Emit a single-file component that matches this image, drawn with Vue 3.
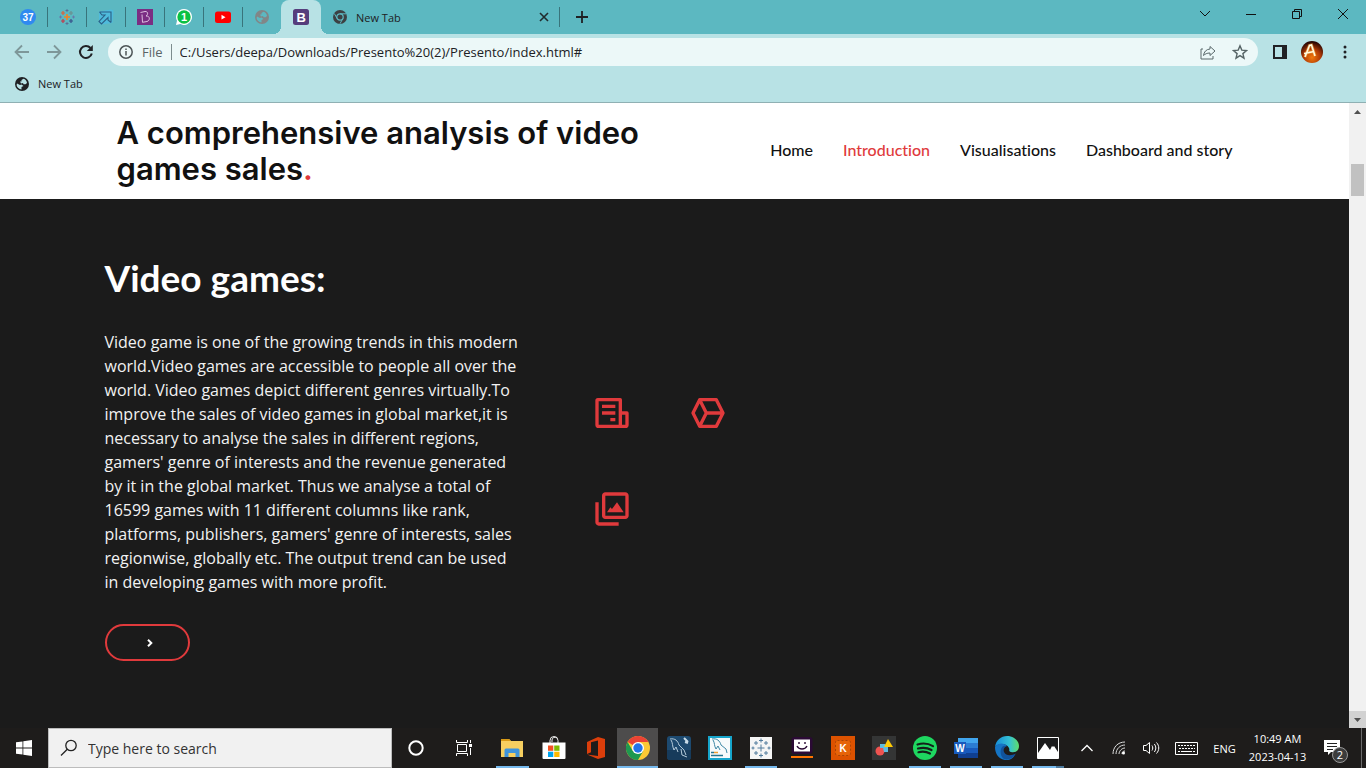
<script setup>
import { ref } from 'vue'

const address = ref('C:/Users/deepa/Downloads/Presento%20(2)/Presento/index.html#')
const search = ref('')
const links = ['Home', 'Introduction', 'Visualisations', 'Dashboard and story']
const lines = [
  'Video game is one of the growing trends in this modern',
  'world.Video games are accessible to people all over the',
  'world. Video games depict different genres virtually.To',
  'improve the sales of video games in global market,it is',
  'necessary to analyse the sales in different regions,',
  "gamers' genre of interests and the revenue generated",
  'by it in the global market. Thus we analyse a total of',
  '16599 games with 11 different columns like rank,',
  "platforms, publishers, gamers' genre of interests, sales",
  'regionwise, globally etc. The output trend can be used',
  'in developing games with more profit.'
]
</script>

<template>
  <div class="screen">
    <div class="tabs">
      <button class="pin" aria-label="Calendar">
        <svg width="16" height="16" viewBox="0 0 16 16"><circle cx="8" cy="8" r="8" fill="#2f8af0" /><text x="8" y="11.5" text-anchor="middle" font-size="10" font-weight="700" fill="#fff" font-family="Liberation Sans, sans-serif">37</text></svg>
      </button>
      <button class="pin" aria-label="Tableau">
        <svg width="16" height="16" viewBox="0 0 16 16" fill="none" stroke-width="1.2">
          <path d="M8 5v6M5 8h6" stroke="#f08326" stroke-width="1.6" />
          <path d="M4 2v4M2 4h4" stroke="#e0603a" />
          <path d="M12 2v4M10 4h4" stroke="#6c8f8f" />
          <path d="M4 10v4M2 12h4" stroke="#c63748" />
          <path d="M12 10v4M10 12h4" stroke="#37508a" />
          <path d="M8 0v3M6.500 1.500h3M8 13v3M6.500 14.500h3" stroke="#5a6591" stroke-width=".8" />
          <path d="M1.500 6.500v3M0 8h3M14.500 6.500v3M13 8h3" stroke="#6a6fa8" stroke-width=".8" />
        </svg>
      </button>
      <button class="pin" aria-label="Shortcut">
        <svg width="16" height="16" viewBox="0 0 16 16" fill="none"><path d="M1 2.500 13 .5l2.500 1-1 12.500L3 15.500 1 14z" fill="#4fbbdc" /><path d="M1.500 3h11.500v10.500M1.500 3 4 6h3L1 12.500 3.500 15 10 8.500V11l3 2.500" stroke="#2a5f85" stroke-width="1.100" /></svg>
      </button>
      <button class="pin" aria-label="Beedy">
        <svg width="16" height="16" viewBox="0 0 16 16" fill="none"><path d="M0 0h16v16H0z" fill="#7b2d83" /><path d="M3.500 3.500 8 2.500c3-.3 3.500 3 1 4.500 4-.5 4.500 4.500 1 5.500l-4.500.8L5 5.500" stroke="#e8cdea" stroke-width=".9" /></svg>
      </button>
      <button class="pin" aria-label="WhatsApp">
        <svg width="16" height="16" viewBox="0 0 16 16"><path d="M8 0a8 8 0 1 1-3.700 15.100L0 16l1-4.200A8 8 0 0 1 8 0z" fill="#fff" /><circle cx="8" cy="8" r="6.700" fill="#0cc143" /><text x="8" y="12" text-anchor="middle" font-size="11" font-weight="700" fill="#fff" font-family="Liberation Sans, sans-serif">1</text></svg>
      </button>
      <button class="pin" aria-label="YouTube">
        <svg width="16" height="16" viewBox="0 0 16 16"><rect y="2.500" width="16" height="11.500" rx="2.500" fill="#f00" /><path d="m6.500 5.800 4 2.400-4 2.400z" fill="#fff" /></svg>
      </button>
      <button class="pin last" aria-label="Web page">
        <svg width="14" height="14" viewBox="0 0 14 14"><circle cx="7" cy="7" r="7" fill="#818687" /><path d="M2 6.500 5 8l1.500-.5L8.500 9 6.500 10v2.400C4 12.300 2 10.300 1.600 8zM8.500 1.800 6.500 3v1.500H5L6 6.500l2-.5.500 1.200h2L12 6c-.2-2-1.700-3.700-3.500-4.200z" fill="#5cb8c1" /></svg>
      </button>
      <button class="pin active" aria-label="Presento">
        <svg width="16" height="16" viewBox="0 0 16 16"><rect width="16" height="16" rx="2.500" fill="#563d7c" /><text x="8.200" y="12.500" text-anchor="middle" font-size="13" font-weight="700" fill="#fff" font-family="Liberation Sans, sans-serif">B</text></svg>
      </button>
      <div class="tab">
        <svg width="14" height="14" viewBox="0 0 14 14"><circle cx="7" cy="7" r="7" fill="#3c4043" /><circle cx="7" cy="7" r="3.200" fill="none" stroke="#5cb8c1" stroke-width="1.200" /><path d="M7 3.800h6M4.200 8.600 1.300 3.500M9.800 8.600 7 13.700" stroke="#5cb8c1" stroke-width="1" /></svg>
        <span>New Tab</span>
        <button aria-label="Close tab"><svg width="10" height="10" viewBox="0 0 10 10"><path d="m1 1 8 8M9 1 1 9" stroke="#202b2d" stroke-width="1.600" /></svg></button>
      </div>
      <button class="plus" aria-label="New tab"><svg width="12" height="12" viewBox="0 0 12 12"><path d="M6 0v12M0 6h12" stroke="#202124" stroke-width="1.800" /></svg></button>
      <div class="win">
        <button aria-label="Search tabs"><svg width="12" height="12" viewBox="0 0 12 12" fill="none"><path d="m1 3 5 5 5-5" stroke="#111" /></svg></button>
        <button aria-label="Minimise"><svg width="12" height="12" viewBox="0 0 12 12"><path d="M1 6.500h10" stroke="#111" /></svg></button>
        <button aria-label="Restore"><svg width="12" height="12" viewBox="0 0 12 12" fill="none" stroke="#111"><path d="M1.500 3.500h7v7h-7zM3.500 3.500v-2h7v7h-2" /></svg></button>
        <button aria-label="Close"><svg width="12" height="12" viewBox="0 0 12 12"><path d="m1 1 10 10M11 1 1 11" stroke="#111" /></svg></button>
      </div>
    </div>

    <div class="toolbar">
      <div class="steer">
        <button aria-label="Back"><svg width="16" height="16" viewBox="0 0 16 16" fill="none" stroke="#7e9799" stroke-width="1.800"><path d="M15 8H2M8 1.500 1.500 8 8 14.500" /></svg></button>
        <button aria-label="Forward"><svg width="16" height="16" viewBox="0 0 16 16" fill="none" stroke="#7e9799" stroke-width="1.800"><path d="M1 8h13M8 1.500 14.500 8 8 14.500" /></svg></button>
        <button aria-label="Reload"><svg width="16" height="16" viewBox="0 0 16 16" fill="none"><path d="M13.800 9.500A6 6 0 1 1 12.500 4" stroke="#202124" stroke-width="2" /><path d="M14.800 1v6h-6z" fill="#202124" /></svg></button>
      </div>
      <div class="omni">
        <svg width="14" height="14" viewBox="0 0 14 14" fill="none" stroke="#4d5557"><circle cx="7" cy="7" r="6.200" stroke-width="1.500" /><path d="M7 6v4.500M7 3.500V5" stroke-width="1.500" /></svg>
        <label for="address">File</label>
        <input id="address" v-model="address" type="text" spellcheck="false" />
        <button aria-label="Share"><svg width="16" height="16" viewBox="0 0 16 16" fill="none" stroke="#5a696b"><path d="M3 5H1v10h12v-3" /><path d="M10 2.500 15 7l-5 4.500V9c-3 0-5 1-6.500 2.500C4 8 6 5.300 10 5z" stroke-linejoin="round" /></svg></button>
        <button aria-label="Bookmark"><svg width="16" height="16" viewBox="0 0 16 16" fill="none"><path d="m8 1.800 1.800 4.300 4.700.4-3.600 3.100 1.100 4.600L8 11.700l-4 2.500 1.100-4.600-3.600-3.100 4.700-.4z" stroke="#566466" stroke-width="1.400" /></svg></button>
      </div>
      <button class="side" aria-label="Side panel"><svg width="14" height="14" viewBox="0 0 14 14"><path d="M0 0h14v14H0zM2 2v10h7V2z" fill="#202124" fill-rule="evenodd" /></svg></button>
      <button class="face" aria-label="Profile">
        <svg width="22" height="22" viewBox="0 0 22 22">
          <defs><radialGradient id="ember" cx=".5" cy=".75" r=".7"><stop stop-color="#f27a0c" /><stop offset=".55" stop-color="#b03a05" /><stop offset="1" stop-color="#2a0703" /></radialGradient></defs>
          <circle cx="11" cy="11" r="11" fill="url(#ember)" /><path d="M4 16 8.500 4.500l2-.5L14 15M6 11.500l7-1" fill="none" stroke="#ffb347" stroke-width="3" opacity=".6" /><path d="M4 16 8.500 4.500l2-.5L14 15M3 12.500l10-2" fill="none" stroke="#fffbe0" stroke-width="1.500" />
        </svg>
      </button>
      <button class="more" aria-label="Menu"><svg width="4" height="14" viewBox="0 0 4 14" fill="#202124"><circle cx="2" cy="2" r="1.500" /><circle cx="2" cy="7" r="1.500" /><circle cx="2" cy="12" r="1.500" /></svg></button>
    </div>

    <div class="bookmarks">
      <a href="#">
        <svg width="14" height="14" viewBox="0 0 14 14"><circle cx="7" cy="7" r="7" fill="#202124" /><path d="M2 6.500 5 8l1.500-.5L8.500 9 6.500 10v2.400C4 12.300 2 10.300 1.600 8zM8.500 1.800 6.500 3v1.500H5L6 6.500l2-.5.500 1.200h2L12 6c-.2-2-1.700-3.700-3.500-4.200z" fill="#b8e2e5" /></svg>
        New Tab
      </a>
    </div>

    <div class="view">
      <div class="page">
        <header>
          <div class="box bar">
            <h1>A comprehensive analysis of video<br />games sales<span>.</span></h1>
            <nav><a v-for="link in links" :key="link" href="#" :class="{ on: link === 'Introduction' }">{{ link }}</a></nav>
          </div>
        </header>
        <main>
          <div class="box about">
            <section>
              <h2>Video games:</h2>
              <p><template v-for="line in lines" :key="line">{{ line }}<br /></template></p>
              <button class="go" aria-label="Read more"><svg width="6" height="8" viewBox="0 0 6 8" fill="none"><path d="m1 .8 3.300 3.200L1 7.200" stroke="#fff" stroke-width="2" /></svg></button>
            </section>
            <div class="marks">
              <svg viewBox="0 0 24 24" fill="#e03a3c"><path d="M3.500 3H17a1 1 0 0 1 1 1v7h3a1 1 0 0 1 1 1v7a2 2 0 0 1-2 2H4a2 2 0 0 1-2-2V4.500A1.500 1.500 0 0 1 3.500 3zM4 5v14h12V5zm14 8v6h2v-6z" fill-rule="evenodd" /><path d="M6 7h8v2H6zM6 11h8v2H6zM11 15h3v2h-3z" /></svg>
              <svg viewBox="0 0 24 24" fill="none" stroke="#e03a3c" stroke-width="2" stroke-linejoin="round"><path d="M3 12 7 4h10l4 8-4 8H7zM7 4l4 8-4 8M11 12h10" /></svg>
              <svg viewBox="0 0 24 24" fill="#e03a3c"><path d="M20 2H8c-1.103 0-2 .897-2 2v12c0 1.103.897 2 2 2h12c1.103 0 2-.897 2-2V4c0-1.103-.897-2-2-2zM8 16V4h12v12H8z" /><path d="M4 8H2v12c0 1.103.897 2 2 2h12v-2H4V8zM12 12l-1-1-2 3h10l-4-6z" /></svg>
            </div>
          </div>
        </main>
      </div>
      <div class="scroll" aria-hidden="true">
        <span class="end"><svg width="7" height="4" viewBox="0 0 7 4"><path d="M3.500 0 7 4H0z" fill="#505050" /></svg></span>
        <span class="thumb"></span>
        <span class="end down"><svg width="7" height="4" viewBox="0 0 7 4"><path d="M3.500 4 7 0H0z" fill="#505050" /></svg></span>
      </div>
    </div>

    <footer>
      <button class="cell" aria-label="Start"><svg width="16" height="16" viewBox="0 0 16 16" fill="#fff"><path d="M0 2.300 6.500 1.400v6.200H0zM7.300 1.300 16 0v7.600H7.300zM0 8.400h6.500v6.200L0 13.700zM7.300 8.400H16V16l-8.700-1.300z" /></svg></button>
      <div class="find">
        <svg width="18" height="18" viewBox="0 0 18 18" fill="none" stroke="#222" stroke-width="1.300"><circle cx="11" cy="6.500" r="5.200" /><path d="M7.300 10.200 1 16.500" /></svg>
        <input v-model="search" type="text" aria-label="Search" placeholder="Type here to search" />
      </div>
      <button class="cell" aria-label="Cortana"><svg width="16" height="16" viewBox="0 0 16 16"><circle cx="8" cy="8" r="6.700" fill="none" stroke="#fff" stroke-width="2" /></svg></button>
      <button class="cell" aria-label="Task view"><svg width="16" height="16" viewBox="0 0 16 16" fill="none" stroke="#fff"><path d="M1.500 4.500h9v7h-9zM.5 0v2.500h11V0M.5 16v-2.500h11V16M14.500 0v3M14.500 8v7" /><path d="M13 4h3v3h-3z" fill="#fff" stroke="none" /></svg></button>
      <div class="apps">
        <button class="run" aria-label="File Explorer"><svg width="22" height="20" viewBox="0 0 22 20"><path d="M0 1h8l2 2h12v16H0z" fill="#f7cf60" /><path d="M0 1h8l2 2H0z" fill="#d99a16" /><path d="M3.500 19v-7a1.500 1.500 0 0 1 1.500-1.500h12a1.500 1.500 0 0 1 1.500 1.500v7h-4v-4h-7v4z" fill="#3f94dc" /></svg></button>
        <button aria-label="Store"><svg width="24" height="24" viewBox="0 0 24 24"><path d="M8 7V4.500a4 4 0 0 1 8 0V7M10 6V4a3 3 0 0 1 5-2" fill="none" stroke="#eee" /><path d="M.5 6.500h23V22a1 1 0 0 1-1 1h-21a1 1 0 0 1-1-1z" fill="#fff" /><path d="M6 9.500h5.300v5.300H6z" fill="#f25022" /><path d="M12.200 9.500h5.300v5.300h-5.300z" fill="#7fba00" /><path d="M6 15.700h5.300V21H6z" fill="#00a4ef" /><path d="M12.200 15.700h5.300V21h-5.300z" fill="#ffb900" /></svg></button>
        <button aria-label="Office"><svg width="20" height="22" viewBox="0 0 20 22"><path d="m1 5 11-5 7 2v18l-7 2-11-4.500 11 1.500V3.500L5 5.200v10L1 17z" fill="#dc3e0b" /></svg></button>
        <button class="run now" aria-label="Chrome"><svg width="24" height="24" viewBox="0 0 24 24"><circle cx="12" cy="12" r="12" fill="#fcc934" /><path d="M12 12 1.600 6A12 12 0 0 1 22.400 6H12z" fill="#ea4335" /><path d="M1.600 6A12 12 0 0 0 12 24l5.200-9L12 12 6.800 15z" fill="#1e9850" /><circle cx="12" cy="12" r="6" fill="#fff" /><circle cx="12" cy="12" r="4.700" fill="#2374e8" /></svg></button>
        <button aria-label="MySQL Workbench"><svg width="24" height="24" viewBox="0 0 24 24"><rect width="24" height="24" rx="3" fill="#1d4a70" /><path d="M0 14h24v7a3 3 0 0 1-3 3H3a3 3 0 0 1-3-3z" fill="#173b5b" /><path d="M3 3c5-1 8 2 9 6l5 5 2 5M4 4c2 3 1 6 3 10l2-3 2 5M14 13l1 6 5 2" fill="none" stroke="#b6ccdb" /><path d="m17 2 4 4M18 6l3 1" stroke="#c9dce8" stroke-width="2" /></svg></button>
        <button aria-label="MySQL Installer"><svg width="24" height="24" viewBox="0 0 24 24"><path d="M0 0h24v24H0z" fill="#16a5cc" /><path d="M2 2h20v20H2z" fill="#f7fafb" /><path d="M4 3c5-1 8 2 9 6l5 4 1 4M5 4c2 3 1 6 3 9l2-3 2 4" fill="none" stroke="#3c87a5" /><path d="M3 16.500h3M3 19.500h12" stroke="#27748f" stroke-width="1.500" /><path d="M6 16.500h4" stroke="#ef9f32" stroke-width="1.500" /></svg></button>
        <button class="run" aria-label="Tableau"><svg width="22" height="22" viewBox="0 0 22 22"><path d="M0 0h22v22H0z" fill="#f5f5f5" /><path d="M11 7.500v7M7.500 11h7M6 4v4M4 6h4M16 4v4M14 6h4M6 14v4M4 16h4M16 14v4M14 16h4M11 1.500v4M9 3.500h4M11 16.500v4M9 18.500h4M3 9.500v3M1.500 11h3M19 9.500v3M17.500 11h3" stroke="#527c9d" /></svg></button>
        <button aria-label="Chat"><svg width="22" height="22" viewBox="0 0 22 22"><rect x=".5" width="21" height="17" rx="3" fill="#2b0a35" /><path d="M3 2.500h16v12H3z" fill="#fff" /><path d="M8 5v2M14 5v2M6 9c2 4 8 4 10 0" fill="none" stroke="#2b0a35" stroke-width="1.400" /><path d="M0 20h22" stroke="#ff7300" stroke-width="2" /></svg></button>
        <button aria-label="Kahoot"><svg width="24" height="24" viewBox="0 0 24 24"><path d="M0 0h24v24H0z" fill="#dd5200" /><rect x="4.500" y="4.500" width="15" height="15" rx="2" fill="#e66308" stroke="#a94304" stroke-dasharray="2 2" /><text x="12" y="16" text-anchor="middle" font-size="10" font-weight="700" fill="#fff" font-family="Liberation Sans, sans-serif">K</text></svg></button>
        <button aria-label="Shapes"><svg width="24" height="24" viewBox="0 0 24 24"><path d="M0 0h24v24H0z" fill="#343535" /><circle cx="8" cy="15" r="4.500" fill="#ef5350" /><path d="M8 8h5l3 3v5h-4l-1-4H8z" fill="#5dbce0" /><path d="m16 3 5 8h-9z" fill="#ffca05" /></svg></button>
        <button class="run" aria-label="Spotify"><svg width="24" height="24" viewBox="0 0 24 24"><circle cx="12" cy="12" r="12" fill="#1ed760" /><path d="M4.500 8.500c5-1.600 11-1 15.500 1.600M5 12.500c5-1.300 9.500-.8 13.500 1.500M5.500 16.200c4-1 8-.6 11.500 1.300" fill="none" stroke="#14211a" stroke-width="2.200" stroke-linecap="round" /></svg></button>
        <button class="run" aria-label="Word"><svg width="24" height="22" viewBox="0 0 24 22"><path d="M4 1h20v5H4z" fill="#41a5ee" /><path d="M4 6h20v5H4z" fill="#2b7cd3" /><path d="M4 11h20v5H4z" fill="#185abd" /><path d="M4 16h20v5H4z" fill="#103f91" /><path d="M0 5h12v12H0z" fill="#185abd" /><text x="6" y="14.500" text-anchor="middle" font-size="10" font-weight="700" fill="#fff" font-family="Liberation Sans, sans-serif">W</text></svg></button>
        <button class="run" aria-label="Edge"><svg width="24" height="24" viewBox="0 0 24 24"><defs><linearGradient id="sea" x2="1"><stop stop-color="#168bd8" /><stop offset=".6" stop-color="#35c1d4" /><stop offset="1" stop-color="#5fdd69" /></linearGradient></defs><path d="M0 11C1 4 6 0 12 0c7 0 12 5 12 10 0 5-4 7-8 6-3-1-1-2-2-4C12 8 5 6 0 11z" fill="url(#sea)" /><path d="M0 11c3-5 10-4 12-1-3 0-5 3-4 7 1 4 6 6 12 2-3 5-8 6-12 4.500C3 22 0 17 0 11z" fill="#1574c4" /><path d="M6 13c1-3 3-4 6-3-3 1-4 4-3 6 2 4 7 4 12 1.500-3 5-8 7-12 5.500-3-2-4-6-3-10z" fill="#11539c" /></svg></button>
        <button class="run stack" aria-label="Photos"><svg width="22" height="22" viewBox="0 0 22 22"><path d="M.5.500h21v21H.5z" fill="#1b1b1c" stroke="#fff" /><path d="M1 16 8 6l5 7 2-4 1 1 1-1 4 6v6.500H1z" fill="#fff" /></svg></button>
      </div>
      <div class="tray">
        <button aria-label="Hidden icons"><svg width="14" height="8" viewBox="0 0 14 8" fill="none"><path d="m1.500 7 5.500-5.500L12.500 7" stroke="#fff" stroke-width="1.300" /></svg></button>
        <button aria-label="Network"><svg width="14" height="14" viewBox="0 0 14 14" fill="none" stroke="#ddd"><path d="M1 13C1 6 6 1 13 1M4 13c0-5 4-9 9-9M7 13c0-3 3-6 6-6M10 13c0-2 1-3 3-3" /><circle cx="11.500" cy="12" r="1.500" fill="#fff" stroke="none" /></svg></button>
        <button aria-label="Volume"><svg width="17" height="14" viewBox="0 0 17 14" fill="none" stroke="#fff"><path d="M.5 4.500H3l3.500-3v11L3 9.500H.5zM9 4.500c1 1.500 1 3.500 0 5M11.300 3c2 2.500 2 5.500 0 8M13.500 1.500c3 3.300 3 7.700 0 11" /></svg></button>
        <button class="kb" aria-label="Keyboard"><svg width="23" height="13" viewBox="0 0 23 13" fill="none" stroke="#fff"><path d="M.5.500h22v12H.5z" /><path d="M3 3.500h17M4 6.500h16" stroke-dasharray="2 1" /><path d="M3 9.500h2M6 9.500h11M18 9.500h2" /></svg></button>
        <button class="lang">ENG</button>
        <button class="clock">10:49 AM<br />2023-04-13</button>
        <button class="note" aria-label="Notifications"><svg width="16" height="16" viewBox="0 0 16 16"><path d="M0 0h16v12H7l-3 3v-3H0z" fill="#fff" /><path d="M3 3.500h10M3 6.500h10M3 9.500h6" stroke="#222" /></svg><span>2</span></button>
      </div>
    </footer>
  </div>
</template>

<style>
body { margin: 0; overflow: hidden; }
</style>

<style scoped>
* { box-sizing: border-box; }
.screen { display: flex; flex-direction: column; height: 100vh; font-family: "Open Sans", sans-serif; font-size: 11px; color: #202124; background: #b8e2e5; }
button { padding: 0; border: 0; background: none; font: inherit; color: inherit; display: flex; align-items: center; justify-content: center; }
svg { display: block; flex: none; }
a { color: inherit; text-decoration: none; }
input { min-width: 0; border: 0; padding: 0; background: none; font: inherit; color: inherit; outline: none; }

.tabs { display: flex; align-items: center; height: 34px; padding-left: 9px; background: #5cb8c1; }
.pin { width: 39px; height: 20px; border-right: 1px solid #39747b; }
.pin.last { border: 0; width: 38px; }
.pin.active { width: 40px; height: 34px; border: 0; border-radius: 8px 8px 0 0; background: #b8e2e5; position: relative; }
.pin.active::before, .pin.active::after { content: ""; position: absolute; bottom: 0; width: 8px; height: 8px; }
.pin.active::before { right: 100%; background: radial-gradient(circle at 0 0, transparent 8px, #b8e2e5 8px); }
.pin.active::after { left: 100%; background: radial-gradient(circle at 100% 0, transparent 8px, #b8e2e5 8px); }
.tab { display: flex; align-items: center; gap: 9px; width: 239px; height: 20px; padding: 0 10px 0 12px; border-right: 1px solid #39747b; }
.tab button { margin-left: auto; }
.plus { width: 44px; }
.win { display: flex; margin-left: auto; margin-bottom: 6px; }
.win button { width: 46px; height: 28px; }

.toolbar { display: flex; align-items: center; height: 36px; padding-right: 18px; }
.steer { display: flex; width: 108px; padding: 0 6px; }
.steer button { width: 32px; height: 28px; }
.omni { display: flex; flex: 1; align-items: center; height: 28px; padding: 0 10px 0 11px; border-radius: 14px; background: #ecf8f8; font-size: 13px; }
.omni label { margin: 0 8px 0 9px; padding-right: 8px; line-height: 16px; border-right: 1px solid #7d8c8e; color: #5a6466; }
.omni input { flex: 1; }
.omni button { margin-left: 16px; }
.side { width: 14px; margin: 0 14px 0 15px; }
.more { margin-left: 19px; width: 6px; }
.bookmarks { display: flex; align-items: center; height: 33px; padding: 0 15px 5px; border-bottom: 1px solid #8fb0b3; }
.bookmarks a { display: flex; align-items: center; gap: 9px; }

.view { display: flex; flex: 1; min-height: 0; }
.page { flex: 1; display: flex; flex-direction: column; background: #1b1b1b; }
.box { max-width: 1140px; margin: 0 auto; }
header { background: #fff; padding: 12px 0; }
.bar { display: flex; align-items: center; justify-content: space-between; padding: 0 12px; }
h1 { margin: 0; font: 600 31px/36px Inter, sans-serif; color: #111; }
h1 span { color: #e03a3c; }
nav { display: flex; gap: 30px; padding-bottom: 2px; font: 500 16px/24px Lato, sans-serif; font-variant-ligatures: none; color: #111; }
nav .on { color: #e03a3c; }
main { padding: 60px 0; }
.about { display: flex; align-items: center; gap: 60px; }
section { flex: 0 0 427px; color: #f2f2f2; }
h2 { margin: 0 0 33px; font: 700 37px/38px Lato, sans-serif; color: #fff; }
p { margin: 0 0 30px; font-size: 16px; line-height: 24px; white-space: nowrap; }
.go { width: 85px; height: 37px; padding-left: 5px; border: 2px solid #e03a3c; border-radius: 19px; }
.marks { display: grid; grid-template-columns: 40px 40px; gap: 56px; padding-top: 2px; }
.marks svg { width: 40px; height: 40px; }
.scroll { display: flex; flex-direction: column; width: 17px; background: #f1f1f1; }
.end { display: flex; align-items: center; justify-content: center; height: 17px; }
.down { margin-top: auto; background: #d2d2d2; }
.thumb { height: 32px; margin: 44px 2px 0; background: #c1c1c1; }

footer { display: flex; height: 40px; background: #1e1c1b; color: #fff; }
.cell { flex: none; width: 48px; }
.find { display: flex; flex: none; align-items: center; gap: 10px; width: 344px; padding-left: 11px; background: #f1f1f1; border: 1px solid #bcbcbc; color: #222; font-size: 14px; }
.find input { flex: 1; }
.find input::placeholder { color: #333; opacity: 1; }
.apps { display: grid; flex: none; grid-template-columns: repeat(3, 42px) repeat(11, 41px); margin-left: 3px; }
.apps button { position: relative; }
.run::after { content: ""; position: absolute; left: 5px; right: 4px; bottom: 0; height: 2px; background: #76b9ed; }
.now { background: #4d4c4c; }
.now::after { left: 0; right: 0; }
.stack::after { background: linear-gradient(90deg, #76b9ed 24px, #4d7a9e 24px); }
.tray { display: flex; flex: 1; justify-content: flex-end; padding-right: 4px; }
.tray button { width: 32px; }
.tray .kb { width: 39px; }
.tray .lang { width: 37px; }
.tray .clock { width: 69px; line-height: 18px; white-space: nowrap; }
.tray .note { width: 46px; position: relative; padding-right: 13px; border-right: 1px solid #6a6a6a; margin-left: 4px; }
.note span { position: absolute; left: 16px; top: 19px; width: 16px; height: 16px; border: 1px solid #999; border-radius: 8px; background: #3c3c3c; font-size: 11px; line-height: 14px; }
</style>
